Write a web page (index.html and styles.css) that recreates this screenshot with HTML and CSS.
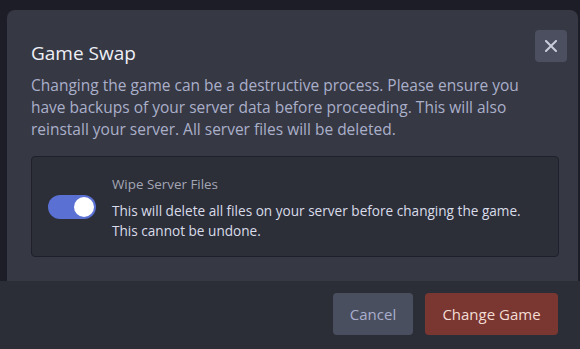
FILE: index.html
```html
<!DOCTYPE html>
<html>
<head>
    <title>Game Swap</title>
    <link rel="stylesheet" href="styles.css">
</head>
<body>
    <div class="modal">
        <div class="modal-body">
            <div class="modal-header">
                <h2 class="modal-title">Game Swap</h2>
                <button class="close-button" aria-label="Close">
                    <svg width="12" height="12" viewBox="0 0 12 12">
                        <path d="M1 1 L11 11 M11 1 L1 11" stroke="#c9ccd9" stroke-width="2" stroke-linecap="square"/>
                    </svg>
                </button>
            </div>
            <p class="modal-text">
                Changing the game can be a destructive process. Please ensure you<br>
                have backups of your server data before proceeding. This will also<br>
                reinstall your server. All server files will be deleted.
            </p>
            <div class="option-card">
                <label class="toggle">
                    <span class="toggle-knob"></span>
                </label>
                <div class="option-info">
                    <div class="option-title">Wipe Server Files</div>
                    <div class="option-desc">This will delete all files on your server before changing the game.<br>This cannot be undone.</div>
                </div>
            </div>
        </div>
        <div class="modal-footer">
            <button class="btn btn-cancel">Cancel</button>
            <button class="btn btn-danger">Change Game</button>
        </div>
    </div>
</body>
</html>
```

FILE: styles.css
```css
html, body {
    margin: 0;
    height: 100%;
    overflow: hidden;
}
body {
    font-family: "Open Sans", "Noto Sans", sans-serif;
    background-color: #1d1d27;
    padding-top: 10px;
    box-sizing: border-box;
}
.modal {
    display: flex;
    flex-direction: column;
}
.modal-body {
    margin: 0 2px 0 7px;
    padding: 20px 11px 24px 24px;
    background-color: #363843;
    border-radius: 8px 8px 0 0;
}
.modal-header {
    display: flex;
    justify-content: space-between;
    align-items: flex-start;
}
.modal-title {
    margin: 0;
    padding-top: 10px;
    font-size: 19px;
    font-weight: normal;
    line-height: 26px;
    color: #eef0f7;
}
.close-button {
    width: 32px;
    height: 32px;
    border: none;
    border-radius: 4px;
    background-color: #4b4f60;
    display: flex;
    align-items: center;
    justify-content: center;
    padding: 0;
    cursor: pointer;
}
.modal-text {
    margin: 8px 0 0 0;
    font-size: 15.5px;
    line-height: 22px;
    color: #aaafca;
    white-space: nowrap;
}
.option-card {
    margin: 16px 8px 0 0;
    height: 101px;
    box-sizing: border-box;
    display: flex;
    align-items: center;
    gap: 16px;
    padding: 0 16px;
    background-color: #2c2e38;
    border: 1px solid #1f2029;
    border-radius: 4px;
}
.toggle {
    width: 48px;
    height: 24px;
    border-radius: 12px;
    background-color: #5a70d2;
    display: flex;
    align-items: center;
    justify-content: flex-end;
    padding: 0 2px;
    box-sizing: border-box;
    flex-shrink: 0;
}
.toggle-knob {
    width: 20px;
    height: 20px;
    border-radius: 50%;
    background-color: #ffffff;
}
.option-info {
    padding-top: 2px;
}
.option-title {
    font-size: 13.4px;
    line-height: 18px;
    color: #a3a6b4;
    margin-bottom: 8px;
}
.option-desc {
    font-size: 13.6px;
    line-height: 20px;
    color: #d9dce9;
}
.modal-footer {
    display: flex;
    justify-content: flex-end;
    gap: 12px;
    padding: 12px 22px 20px 0;
    background-color: #2b2d37;
    flex-grow: 1;
}
.btn {
    height: 42px;
    border: none;
    border-radius: 4px;
    font-family: inherit;
    font-size: 15px;
    cursor: pointer;
}
.btn-cancel {
    width: 80px;
    background-color: #4a4f5f;
    color: #a9aecd;
}
.btn-danger {
    width: 133px;
    background-color: #7a3631;
    color: #f3dcd4;
}
```
